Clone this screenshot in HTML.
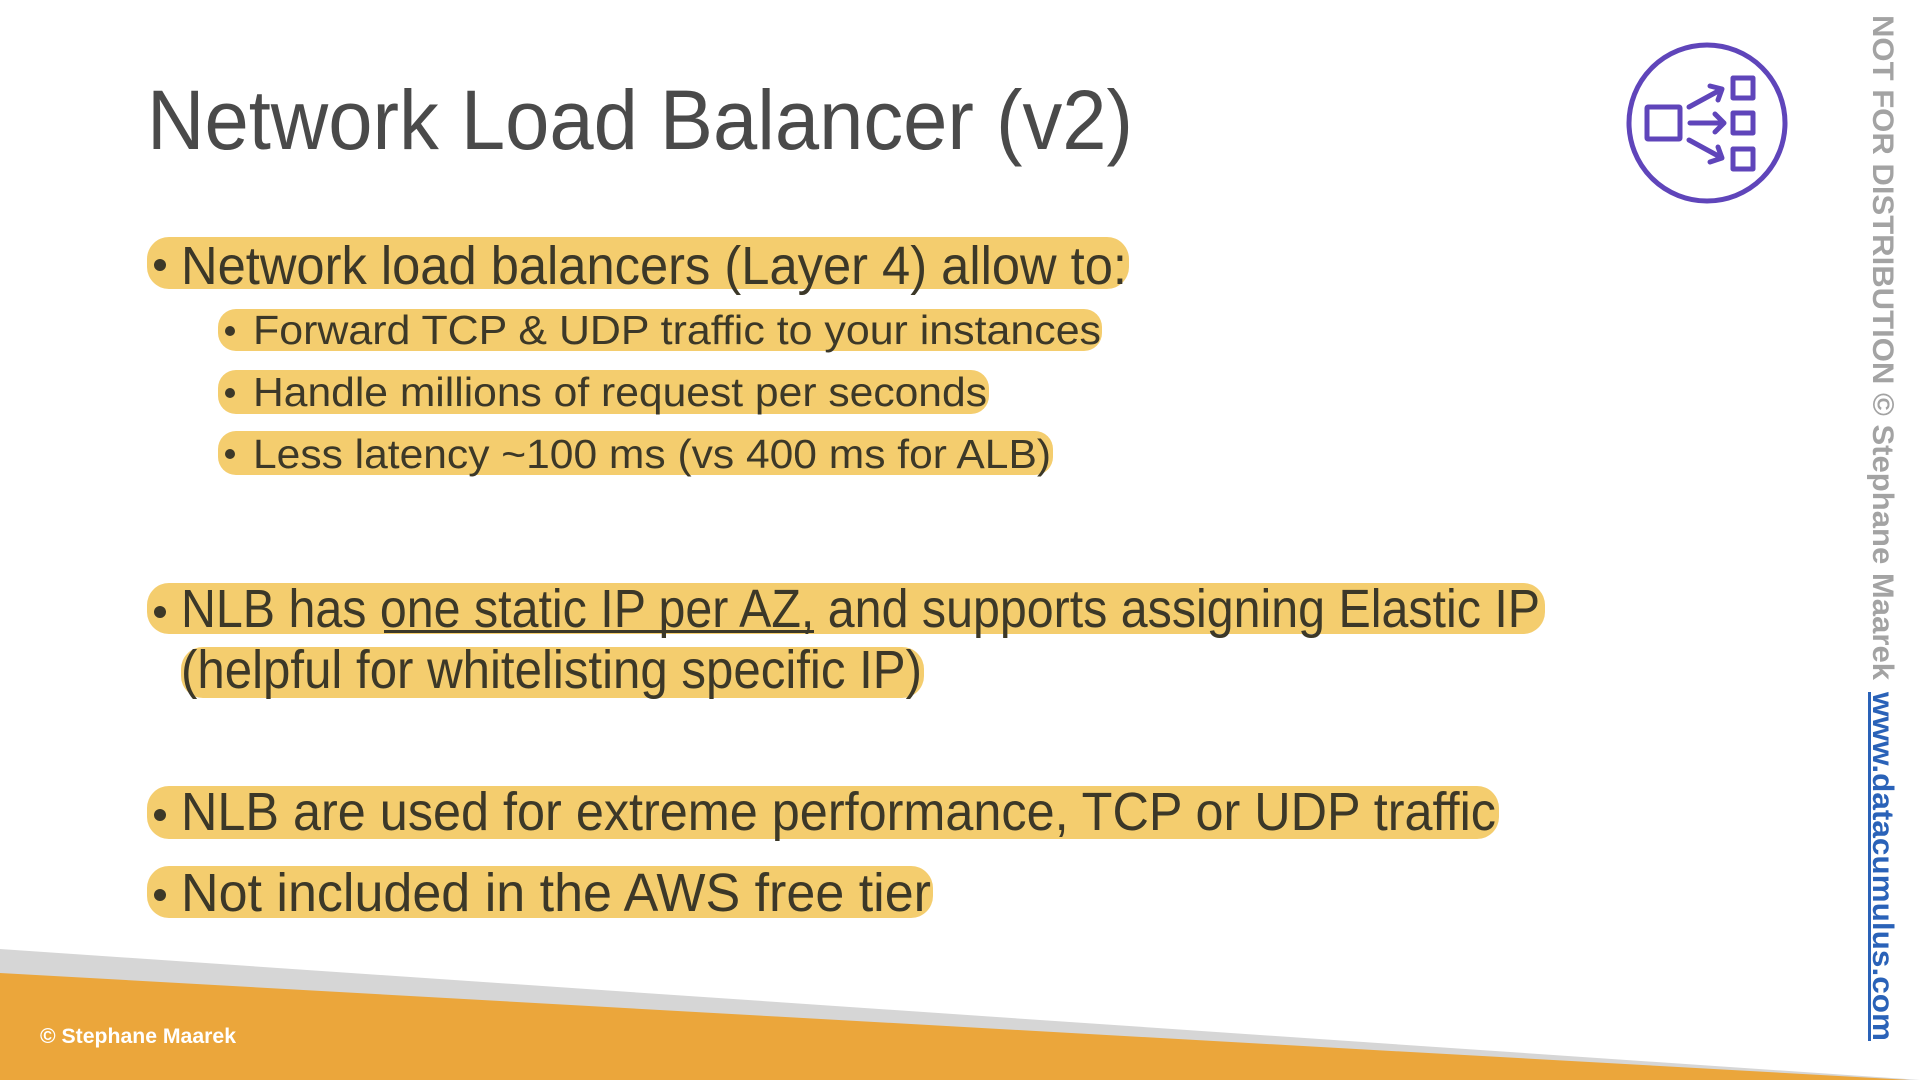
<!DOCTYPE html>
<html><head><meta charset="utf-8"><style>
html,body{margin:0;padding:0;background:#fff;width:1920px;height:1080px;overflow:hidden}
svg{display:block}
text{font-family:"Liberation Sans",sans-serif}
</style></head><body>
<svg width="1920" height="1080" viewBox="0 0 1920 1080" xmlns="http://www.w3.org/2000/svg">
<!-- footer -->
<polygon points="0,949 1920,1080 0,1080" fill="#d6d6d6"/>
<polygon points="0,973 1910,1080 0,1080" fill="#eba63b"/>
<text x="40" y="1043" font-size="21" font-weight="bold" fill="#fff" textLength="196" lengthAdjust="spacingAndGlyphs">© Stephane Maarek</text>

<!-- title -->
<text x="147" y="149" font-size="84" fill="#4a4a4a" textLength="986" lengthAdjust="spacingAndGlyphs">Network Load Balancer (v2)</text>

<!-- highlight bands -->
<g fill="#f4cd6e">
<rect x="147" y="237" width="982" height="52" rx="22"/>
<rect x="218" y="309" width="884" height="42" rx="18"/>
<rect x="218" y="370" width="771" height="44" rx="18"/>
<rect x="218" y="431" width="835" height="44" rx="18"/>
<rect x="147" y="583" width="1398" height="51" rx="22"/>
<rect x="181" y="647" width="743" height="51" rx="22"/>
<rect x="147" y="786" width="1352" height="53" rx="22"/>
<rect x="147" y="866" width="786" height="52" rx="22"/>
</g>

<g fill="#3c3828">
<circle cx="160" cy="265" r="6"/>
<circle cx="230" cy="331" r="5"/>
<circle cx="230" cy="393" r="5"/>
<circle cx="230" cy="454" r="5"/>
<circle cx="160" cy="612" r="6"/>
<circle cx="160" cy="815" r="6"/>
<circle cx="160" cy="895" r="6"/>
<text x="181" y="284" font-size="54" textLength="946" lengthAdjust="spacingAndGlyphs">Network load balancers (Layer 4) allow to:</text>
<text x="253" y="344" font-size="41" textLength="848" lengthAdjust="spacingAndGlyphs">Forward TCP &amp; UDP traffic to your instances</text>
<text x="253" y="406" font-size="41" textLength="734" lengthAdjust="spacingAndGlyphs">Handle millions of request per seconds</text>
<text x="253" y="468" font-size="41" textLength="798" lengthAdjust="spacingAndGlyphs">Less latency ~100 ms (vs 400 ms for ALB)</text>
<text x="181" y="627" font-size="54" textLength="1359" lengthAdjust="spacingAndGlyphs">NLB has one static IP per AZ, and supports assigning Elastic IP</text>
<rect x="384" y="630" width="430" height="3"/>
<text x="181" y="688" font-size="54" textLength="741" lengthAdjust="spacingAndGlyphs">(helpful for whitelisting specific IP)</text>
<text x="181" y="830" font-size="54" textLength="1315" lengthAdjust="spacingAndGlyphs">NLB are used for extreme performance, TCP or UDP traffic</text>
<text x="181" y="911" font-size="54" textLength="750" lengthAdjust="spacingAndGlyphs">Not included in the AWS free tier</text>
</g>

<!-- icon -->
<g fill="none" stroke="#5f45ba" stroke-width="5" stroke-linejoin="round" stroke-linecap="round">
<circle cx="1707" cy="123" r="78"/>
<rect x="1647" y="107" width="33" height="32" rx="1"/>
<rect x="1733" y="78" width="20" height="20"/>
<rect x="1733" y="113" width="20" height="20"/>
<rect x="1733" y="149" width="20" height="20"/>
<path d="M1689,107 L1722,89 M1710,86 L1722,89 L1718,100"/>
<path d="M1690,123 L1724,123 M1715,114 L1724,123 L1715,132"/>
<path d="M1689,140 L1722,158 M1710,162 L1722,158 L1718,147"/>
</g>

<!-- vertical watermark -->
<g transform="translate(1873,15) rotate(90)">
<text x="0" y="0" font-size="30" font-weight="bold" fill="#a3a3a3" textLength="665" lengthAdjust="spacingAndGlyphs">NOT FOR DISTRIBUTION © Stephane Maarek</text>
<text x="677" y="0" font-size="30" font-weight="bold" fill="#2a62b8" textLength="349" lengthAdjust="spacingAndGlyphs">www.datacumulus.com</text>
<rect x="677" y="2" width="349" height="3" fill="#2a62b8"/>
</g>
</svg>
</body></html>
